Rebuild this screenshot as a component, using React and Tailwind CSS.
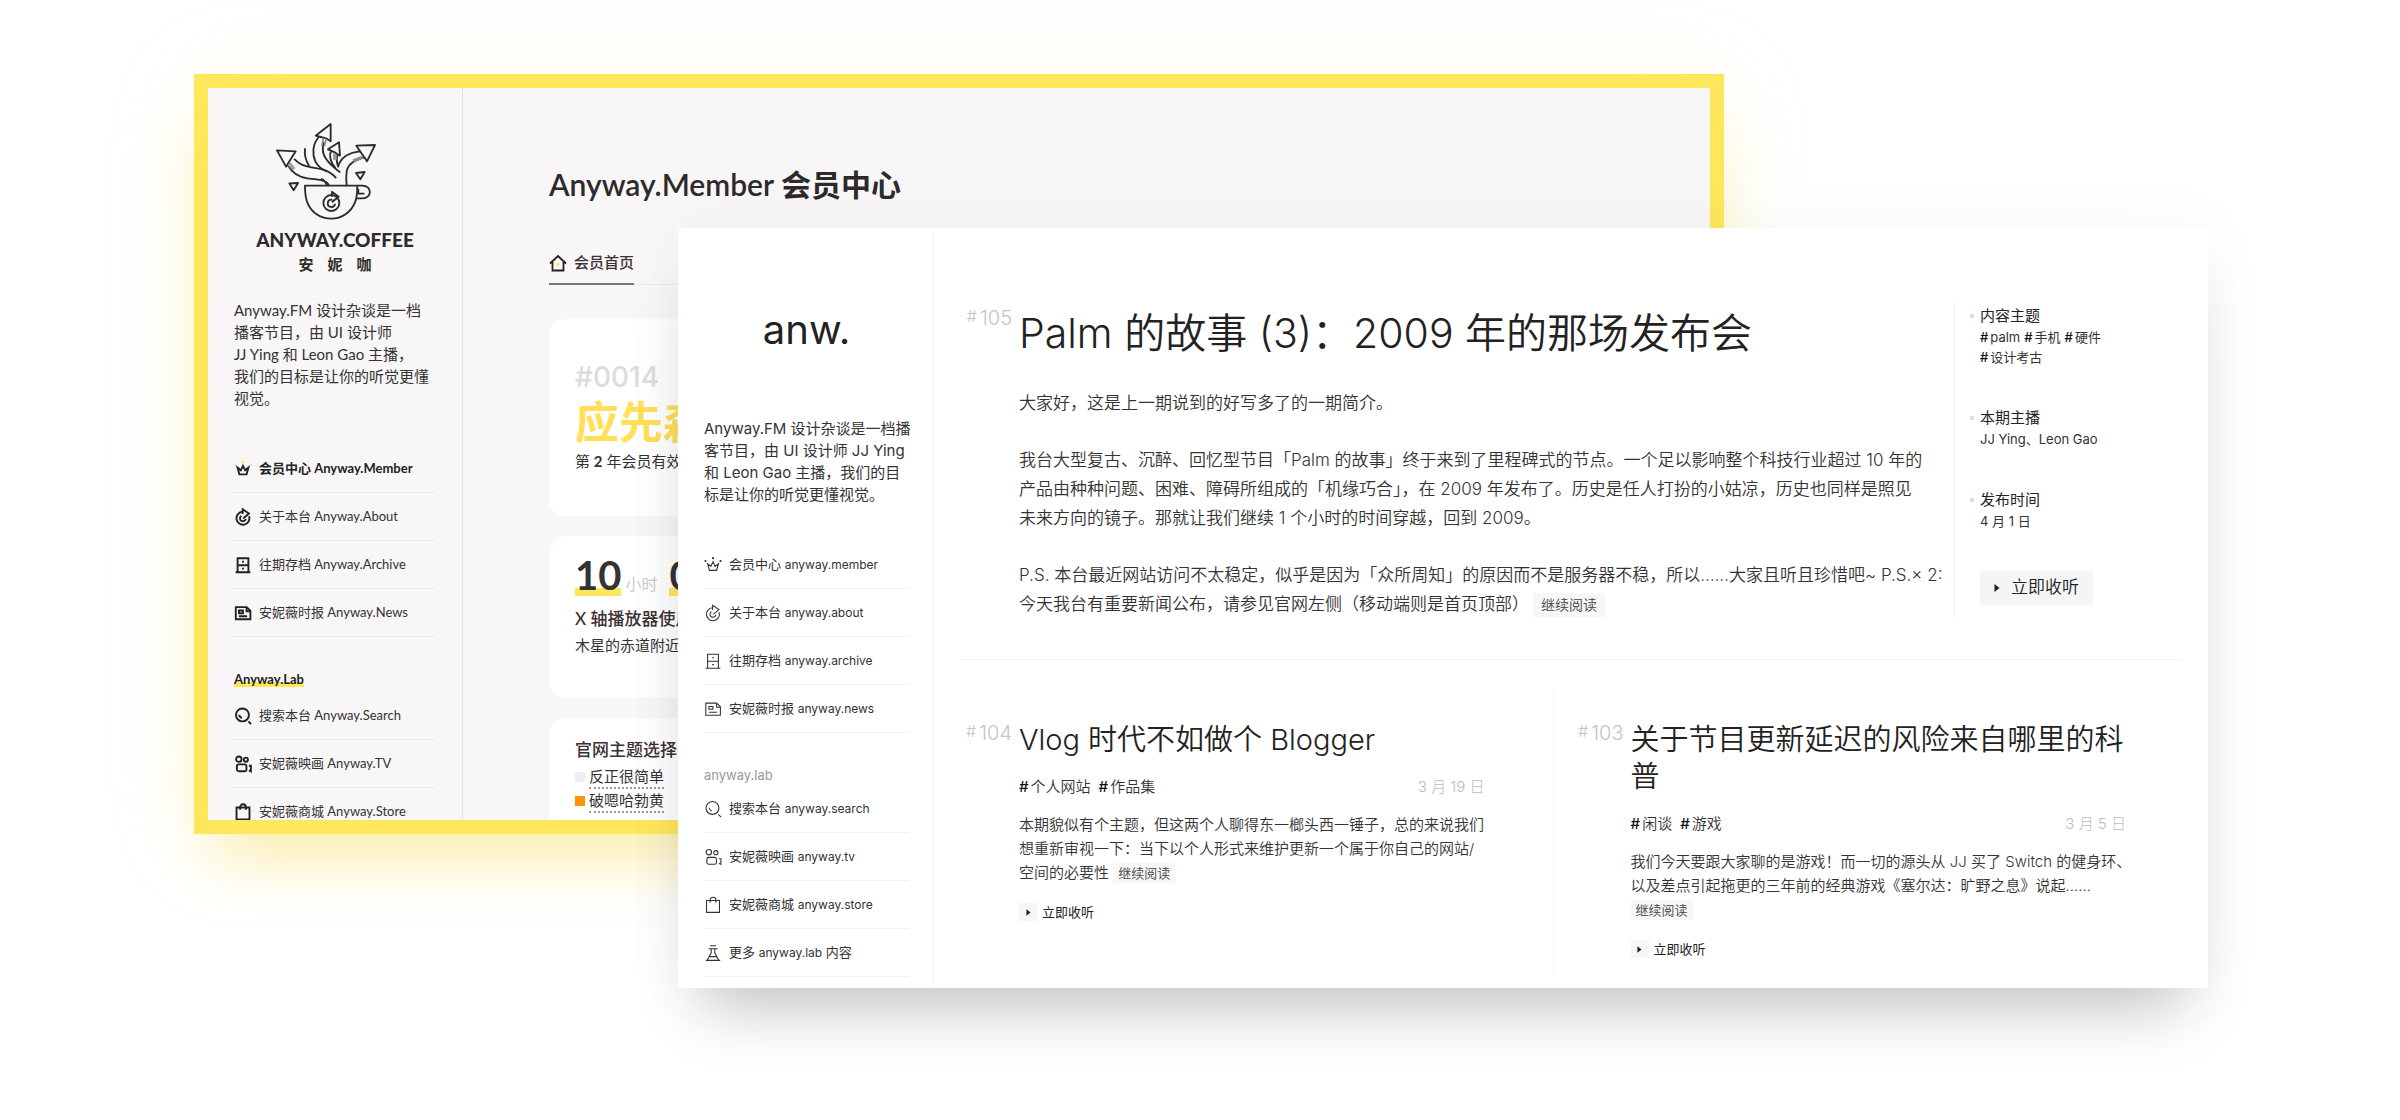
import React from "react";

const ICONS = {
  crown: (dot) => (
    <>
      <path d="M4 8.5l2 7.5h8l2-7.5-3.6 3L10 6.5l-2.4 5z" />
      <g fill={dot} stroke="none">
        <circle cx="1.6" cy="5.6" r="1.2" />
        <circle cx="10" cy="2.4" r="1.2" />
        <circle cx="18.4" cy="5.6" r="1.2" />
      </g>
    </>
  ),
  about: () => (
    <>
      <path d="M9.6 4.2a7.2 7.2 0 1 0 7.2 5" />
      <path d="M9.6 6.6V1.4l7 4.8-6.4 5.4" />
      <path d="M8.2 8.6a3.3 3.3 0 1 0 5 3.4" />
    </>
  ),
  archive: () => (
    <>
      <path d="M4 18V2.5h12V18M4 10.2h12M1.8 18h16.4" />
      <path d="M9 6.4h2M9 14h2" />
    </>
  ),
  news: () => (
    <>
      <path d="M2 3.5h12l4.2 4V17H2z" />
      <path d="M14 3.8V8h4M5.5 13.6h9M5.5 7.2h4.4v3H5.5z" />
    </>
  ),
  search: () => (
    <>
      <circle cx="9.4" cy="8.8" r="7.2" />
      <path d="M16 16l3 3M5.8 8.6c.2 2 1.4 3.2 3 3.6" />
    </>
  ),
  tv: () => (
    <>
      <circle cx="5.4" cy="4.6" r="3" />
      <circle cx="13.2" cy="5.2" r="2.3" />
      <rect x="3.2" y="10.4" width="10.6" height="7.6" rx="2" />
      <path d="M16.5 12h2.3v6.2l-2.3-1.2" />
    </>
  ),
  bag: () => (
    <>
      <path d="M2.8 5h14.4v13.2H2.8z" />
      <path d="M6.8 7.4V4.6a3.2 3.2 0 0 1 6.4 0v2.8" />
    </>
  ),
  flask: () => (
    <>
      <path d="M6.6 2h6.8M5 5.2h10M8 5.2v4.6L3.6 18M12 5.2v4.6l4.4 8.2M2 18.2h16M6.2 14h7.6" />
    </>
  ),
};

function Icon({ name, bold }) {
  return (
    <svg
      viewBox="0 0 20 20"
      className="size-[18px] shrink-0"
      fill="none"
      stroke={bold ? "#222" : "#333"}
      strokeWidth={bold ? 2.1 : 1.2}
      aria-hidden="true"
    >
      {ICONS[name](bold ? "#ffe04d" : "#333")}
    </svg>
  );
}

function NavItem({ icon, zh, en, tail, bold, active }) {
  return (
    <li
      className={
        bold
          ? "h-12 border-b border-dotted border-[#dedcd9]"
          : "h-12 border-b border-[#f2f2f2]"
      }
    >
      <a href="#" className="flex h-full items-center gap-[7px] whitespace-nowrap">
        <Icon name={icon} bold={bold} />
        <span className={active ? "text-[13px] font-bold text-[#222]" : "text-[13px] text-[#333]"}>
          {zh} <span className={bold ? "text-[13px]" : "text-xs"}>{en}</span>
          {tail ? ` ${tail}` : ""}
        </span>
      </a>
    </li>
  );
}

function CoffeeLogo() {
  return (
    <svg
      viewBox="75 38 360 297"
      className="h-[99px] w-[120px]"
      fill="none"
      stroke="#2d2a2b"
      strokeWidth="5.5"
      strokeLinejoin="round"
      strokeLinecap="round"
      aria-hidden="true"
    >
      <path d="M165 229h157c0 20-1 36-7 50-12 30-40 49-71 49-32 0-59-18-71-46-7-16-8-34-8-53z" />
      <path d="M323 229h14c30 0 30 38 0 38h-14M325 241v12h16" />
      <circle cx="244" cy="281" r="24" />
      <path d="M246 260v-13l20 15-19 15M255 285a11 11 0 1 1-10-14" />
      <path d="M81 123l56 3-29 46zM134 150c16 16 28 20 50 24 26 4 54 8 73 31M112 166c16 28 36 38 60 41 24 3 52 2 64 19M215 209c8 3 12 10 15 17" />
      <path d="M197 79l45-35v52l-14-9-16-4zM204 86c-16 20-18 48-8 70 8 16 20 24 34 30M221 100c-6 20-2 36 8 50 10 15 24 26 40 38M165 119c-2 14 2 34 12 50" />
      <path d="M234 120l33-21 3 40-14-9zM243 124c-6 14-2 36 12 50M262 136c-4 14-2 24 2 34" />
      <path d="M319 109l56-2-24 49zM330 126c-28 3-56 12-66 46M344 144c-34 8-50 20-54 42-2 14-2 28 0 42" />
      <path d="M318 191l26-3-13 22zM118 222l26-1-13 22z" />
      <g stroke="#8d8a8a" strokeWidth="5">
        <path d="M120 162l12 14M116 168l12 12M220 88l-4 20M228 90l-4 18M252 134v16M258 136v14M310 152l24-10M314 156l24-10" />
      </g>
    </svg>
  );
}

function PlayGlyph({ className }) {
  return (
    <svg viewBox="0 0 6 8" className={className} fill="#222" aria-hidden="true">
      <path d="M0.5 0l5 4-5 4z" />
    </svg>
  );
}

function ThemeOption({ swatch, label }) {
  return (
    <button type="button" className="flex items-center gap-1 text-left">
      <span className={swatch} />
      <span className="border-b-2 border-dotted border-[#999] leading-[22px]">{label}</span>
    </button>
  );
}

function MemberWindow() {
  return (
    <section className="mb-[154px] mr-[484px] flex min-w-0 overflow-hidden border-[14px] border-[#ffe75c] bg-[#f8f6f7] font-['Lato','Noto_Sans_CJK_SC',sans-serif] text-[#333] shadow-[0_44px_60px_-24px_rgba(240,215,60,0.4),0_10px_80px_rgba(255,230,120,0.18)] [contain:size] [grid-area:1/1]">
      <aside className="w-[255px] shrink-0 border-r border-dotted border-[#d8d6d6] px-[26px] pt-[34px]">
        <div className="flex flex-col items-center">
          <CoffeeLogo />
          <div className="mt-[7px] text-[19px] leading-6 font-black text-[#2d2a2b]">ANYWAY.COFFEE</div>
          <div className="flex gap-[14px] text-[15px] leading-6 font-bold text-[#2d2a2b]">
            <span>安</span>
            <span>妮</span>
            <span>咖</span>
          </div>
        </div>
        <p className="mt-[23px] text-[15px] leading-[22px] whitespace-nowrap">
          Anyway.FM 设计杂谈是一档
          <br />
          播客节目，由 UI 设计师
          <br />
          JJ Ying 和 Leon Gao 主播，
          <br />
          我们的目标是让你的听觉更懂
          <br />
          视觉。
        </p>
        <ul className="mt-9">
          <NavItem bold active icon="crown" zh="会员中心" en="Anyway.Member" />
          <NavItem bold icon="about" zh="关于本台" en="Anyway.About" />
          <NavItem bold icon="archive" zh="往期存档" en="Anyway.Archive" />
          <NavItem bold icon="news" zh="安妮薇时报" en="Anyway.News" />
        </ul>
        <h2 className="mt-8 h-[23px] text-[13px] leading-5 font-bold text-[#222]">
          <span className="bg-linear-to-t from-[#ffe75c] from-30% to-transparent to-30%">
            Anyway.Lab
          </span>
        </h2>
        <ul>
          <NavItem bold icon="search" zh="搜索本台" en="Anyway.Search" />
          <NavItem bold icon="tv" zh="安妮薇映画" en="Anyway.TV" />
          <NavItem bold icon="bag" zh="安妮薇商城" en="Anyway.Store" />
        </ul>
      </aside>
      <div className="min-w-0 flex-1 pt-[76px] pr-[86px] pl-[86px]">
        <h1 className="text-[30px] leading-10 font-semibold text-[#2d2a2b]">Anyway.Member 会员中心</h1>
        <div className="mt-[38px] flex border-b border-[#ebe9ea] text-[15px] font-medium">
          <a href="#" className="-mb-px flex h-[43px] items-center gap-[7px] border-b-2 border-[#777] text-[#3d3032]">
            <svg viewBox="0 0 18 18" className="size-[18px]" fill="none" stroke="#222" strokeWidth="1.8" aria-hidden="true">
              <path d="M1 9.5L9 2l8 7.5M3.500 8v8.500h11V8" />
              <circle cx="9" cy="10.5" r="1.6" fill="#ffe04d" stroke="none" />
            </svg>
            会员首页
          </a>
        </div>
        <div className="mt-[34px] flex flex-col gap-5">
          <article className="h-[197px] rounded-2xl bg-white px-[26px] pt-10">
            <div className="font-['Inter',sans-serif] text-[28px] leading-9 font-medium text-[#dcdcda]">#0014</div>
            <div className="text-[44px] leading-[54px] font-bold text-[#ffe058]">应先森</div>
            <p className="mt-px text-[15px] leading-[22px]">
              第 <b>2</b> 年会员有效期
            </p>
          </article>
          <article className="h-[162px] rounded-2xl bg-white px-[26px] pt-[18px]">
            <div className="flex items-end gap-1 text-base leading-6 text-[#ccc]">
              <b className="bg-linear-to-t from-[#ffe75c] from-20% to-transparent to-20% text-[40px] leading-[42px] text-[#333]">10</b>
              <span className="mr-2">小时</span>
              <b className="bg-linear-to-t from-[#ffe75c] from-20% to-transparent to-20% text-[40px] leading-[42px] text-[#333]">05</b>
              <span>分钟</span>
            </div>
            <h3 className="mt-[10px] text-[17px] leading-[26px] font-medium text-[#3d3032]">X 轴播放器使用时长</h3>
            <p className="text-[15px] leading-[26px]">木星的赤道附近</p>
          </article>
          <article className="h-[162px] rounded-2xl bg-white px-[26px] pt-[19px]">
            <h3 className="text-[17px] leading-[26px] font-medium text-[#3d3032]">官网主题选择</h3>
            <div className="mt-0.5 flex flex-col text-[15px]">
              <ThemeOption swatch="size-[10px] bg-[#eeecee]" label="反正很简单" />
              <ThemeOption swatch="size-[10px] bg-[#ff9500]" label="破嗯哈勃黄" />
            </div>
          </article>
        </div>
      </div>
    </section>
  );
}

function EpisodeNumber({ n, className }) {
  return (
    <div className={className}>
      <span className="text-base leading-5">#</span>
      <span className="text-xl leading-6">{n}</span>
    </div>
  );
}

function Tags({ list, className }) {
  return (
    <div className={className}>
      {list.map((t) => (
        <a key={t} href="#" className="whitespace-nowrap">
          <span className="mr-0.5 font-medium text-[#111]">#</span>
          {t}
        </a>
      ))}
    </div>
  );
}

function EpisodeCard({ n, title, tags, date, children, className }) {
  return (
    <article className={className}>
      <EpisodeNumber
        n={n}
        className="flex w-[52px] shrink-0 items-start justify-end gap-[3px] font-light text-[#c4c4c4]"
      />
      <div className="min-w-0 flex-1">
        <h2 className="text-[29px] leading-[37px] font-[350] text-[#222]">{title}</h2>
        <div className="mt-[17px] flex justify-between text-[15px] leading-6">
          <Tags list={tags} className="flex gap-2 font-[350] text-[#333]" />
          <time className="font-light text-[#bbb]">{date}</time>
        </div>
        <p className="mt-[14px] text-[15px] leading-6 font-[350] whitespace-nowrap text-[#333]">
          {children}
          <button type="button" className="h-5 bg-[#f7f7f7] px-[5px] text-[13px] leading-5 text-[#444]">
            继续阅读
          </button>
        </p>
        <button type="button" className="mt-[18px] flex items-center gap-[5px] text-[13px] leading-[18px] text-[#222]">
          <span className="flex size-[18px] items-center justify-center bg-[#f6f6f6]">
            <PlayGlyph className="h-[7px] w-[5px]" />
          </span>
          立即收听
        </button>
      </div>
    </article>
  );
}

function Fact({ label, children }) {
  return (
    <div>
      <h3 className="flex items-center text-[15px] leading-[22px] text-[#222]">
        <span className="mr-[6px] size-1 bg-[#dedede]" />
        {label}
      </h3>
      <div className="pl-[10px] text-[13px] leading-5">{children}</div>
    </div>
  );
}

function SiteWindow() {
  return (
    <section className="mt-[154px] ml-[484px] flex min-w-0 rounded bg-white font-['Inter','Noto_Sans_CJK_SC',sans-serif] text-[#333] shadow-[0_44px_60px_-24px_rgba(0,0,0,0.22),0_0_70px_rgba(0,0,0,0.04)] [grid-area:1/1]">
      <aside className="w-64 shrink-0 border-r border-[#f4f4f4] pt-[78px] pr-6 pb-[9px] pl-[26px]">
        <div className="text-center text-[40px] leading-[48px] text-[#222]">anw.</div>
        <p className="mt-16 text-[15px] leading-[22px] whitespace-nowrap">
          Anyway.FM 设计杂谈是一档播
          <br />
          客节目，由 UI 设计师 JJ Ying
          <br />
          和 Leon Gao 主播，我们的目
          <br />
          标是让你的听觉更懂视觉。
        </p>
        <ul className="mt-[35px]">
          <NavItem icon="crown" zh="会员中心" en="anyway.member" />
          <NavItem icon="about" zh="关于本台" en="anyway.about" />
          <NavItem icon="archive" zh="往期存档" en="anyway.archive" />
          <NavItem icon="news" zh="安妮薇时报" en="anyway.news" />
        </ul>
        <h2 className="mt-8 h-5 text-[13px] leading-5 text-[#999]">anyway.lab</h2>
        <ul>
          <NavItem icon="search" zh="搜索本台" en="anyway.search" />
          <NavItem icon="tv" zh="安妮薇映画" en="anyway.tv" />
          <NavItem icon="bag" zh="安妮薇商城" en="anyway.store" />
          <NavItem icon="flask" zh="更多" en="anyway.lab" tail="内容" />
        </ul>
      </aside>
      <main className="flex min-w-0 flex-1 flex-col px-[26px] pt-[75px] pb-4">
        <div className="flex">
          <article className="flex min-w-0 flex-1 gap-[7px]">
            <EpisodeNumber
              n="105"
              className="flex w-[52px] shrink-0 items-start justify-end gap-[3px] pt-[3px] font-light text-[#c4c4c4]"
            />
            <div className="min-w-0 flex-1 pt-1.5">
              <h1 className="text-[41px] leading-[48px] font-[350] whitespace-nowrap text-[#222]">
                Palm 的故事 (3)：2009 年的那场发布会
              </h1>
              <div className="mt-8 flex flex-col gap-7 text-[17px] leading-[29px] font-[350] whitespace-nowrap text-[#333]">
                <p>大家好，这是上一期说到的好写多了的一期简介。</p>
                <p>
                  我台大型复古、沉醉、回忆型节目「Palm 的故事」终于来到了里程碑式的节点。一个足以影响整个科技行业超过 10 年的
                  <br />
                  产品由种种问题、困难、障碍所组成的「机缘巧合」，在 2009 年发布了。历史是任人打扮的小姑凉，历史也同样是照见
                  <br />
                  未来方向的镜子。那就让我们继续 1 个小时的时间穿越，回到 2009。
                </p>
                <p>
                  P.S. 本台最近网站访问不太稳定，似乎是因为「众所周知」的原因而不是服务器不稳，所以……大家且听且珍惜吧~ P.S.× 2:
                  <br />
                  今天我台有重要新闻公布，请参见官网左侧（移动端则是首页顶部）
                  <button type="button" className="ml-1 h-6 bg-[#f7f7f7] px-2 text-sm leading-6 text-[#444]">
                    继续阅读
                  </button>
                </p>
              </div>
            </div>
          </article>
          <aside className="flex w-[228px] shrink-0 flex-col items-start border-l border-[#f2f2f2] pt-[2px] pl-[15px]">
            <Fact label="内容主题">
              <Tags list={["palm", "手机", "硬件", "设计考古"]} className="flex max-w-[140px] flex-wrap gap-x-1" />
            </Fact>
            <div className="mt-10">
              <Fact label="本期主播">JJ Ying、Leon Gao</Fact>
            </div>
            <div className="mt-10">
              <Fact label="发布时间">4 月 1 日</Fact>
            </div>
            <button type="button" className="mt-10 ml-[10px] flex h-[34px] items-center gap-[11px] bg-[#f5f5f5] px-[14px] text-[17px] font-[350] text-[#222]">
              <PlayGlyph className="h-2 w-1.5" />
              立即收听
            </button>
          </aside>
        </div>
        <hr className="mt-10 border-[#f4f4f4]" />
        <div className="mt-7 grid flex-1 grid-cols-[17fr_18fr]">
          <EpisodeCard
            n="104"
            title="Vlog 时代不如做个 Blogger"
            tags={["个人网站", "作品集"]}
            date="3 月 19 日"
            className="flex min-w-0 gap-[7px] border-r border-[#f4f4f4] pt-[33px] pr-[68px]"
          >
            本期貌似有个主题，但这两个人聊得东一榔头西一锤子，总的来说我们
            <br />
            想重新审视一下：当下以个人形式来维护更新一个属于你自己的网站/
            <br />
            空间的必要性{" "}
          </EpisodeCard>
          <EpisodeCard
            n="103"
            title="关于节目更新延迟的风险来自哪里的科普"
            tags={["闲谈", "游戏"]}
            date="3 月 5 日"
            className="flex min-w-0 gap-[7px] pt-[33px] pr-[56px] pl-[18px]"
          >
            我们今天要跟大家聊的是游戏！而一切的源头从 JJ 买了 Switch 的健身环、
            <br />
            以及差点引起拖更的三年前的经典游戏《塞尔达：旷野之息》说起……
            <br />
          </EpisodeCard>
        </div>
      </main>
    </section>
  );
}

export default function App() {
  return (
    <div className="grid min-h-screen grid-cols-1 items-stretch bg-white pt-[74px] pr-48 pb-[132px] pl-[194px]">
      <MemberWindow />
      <SiteWindow />
    </div>
  );
}
